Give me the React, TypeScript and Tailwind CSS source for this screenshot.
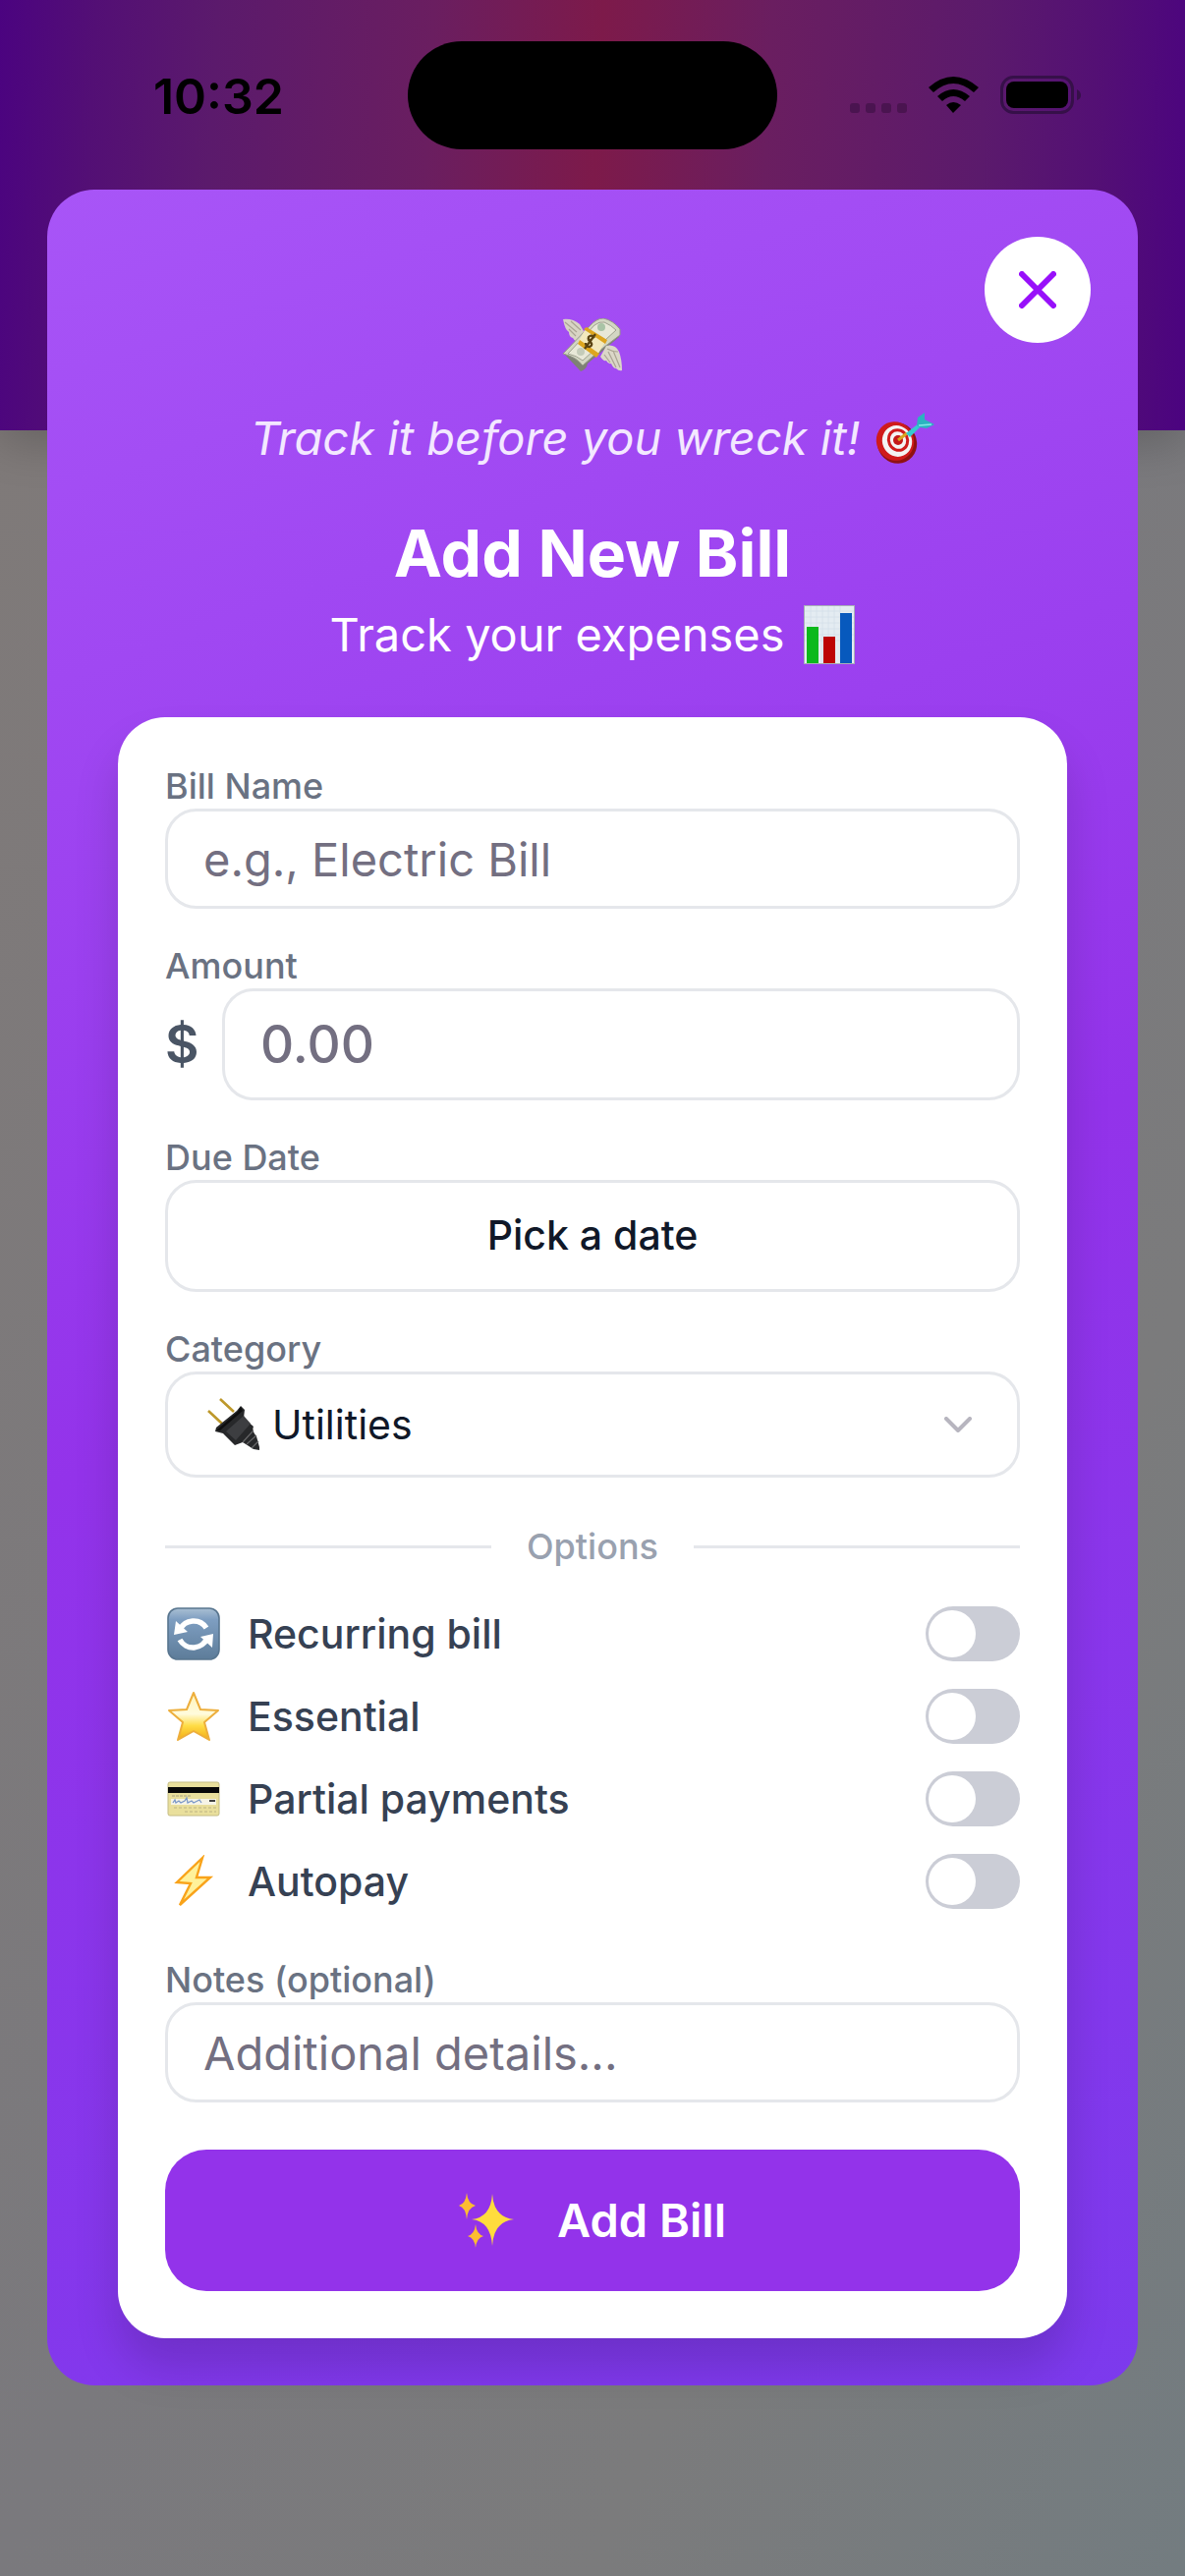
import React, { useState } from 'react';

const fieldBox = 'w-full rounded-[32px] border-[3px] border-[#e5e7eb] bg-white outline-none';
const labelText = 'block text-[36px] leading-[45px] font-medium text-[#6a7282]';

const MoneyIcon = () => (
  <svg viewBox="0 0 60 54" className="h-[54px] w-[60px]" aria-hidden="true">
    <path d="M0 1 Q10 0 17 6 L21 13 L17 24 Q13 25 10 20 Q6 19 6 14 Q2 12 0 1Z" fill="#d8d4c4" />
    <path d="M2 4 L14 14 M6 11 L13 18 M8 3 L18 12" stroke="#aaa493" strokeWidth="1.2" fill="none" />
    <path d="M1 36 L18 54 Q24 52 25 46 L37 36 L57 19 L58 11 L40 4Z" fill="#7e8175" />
    <path d="M0 36 L27 8 Q34 0 41 0 Q51 2 58 11 L58 17 L37 33 L20 48 Q13 39 0 36Z" fill="#d3d6c3" stroke="#959887" strokeWidth="1" />
    <path d="M5 36 L32 7 Q37 3 42 4 Q49 7 54 12 L20 43 Q14 38 5 36Z" fill="#e8e8d8" stroke="#9fa18f" strokeWidth="1" />
    <circle cx="39" cy="9" r="4" fill="#a9c3a6" />
    <circle cx="18" cy="34" r="4" fill="#c4cbb9" />
    <path d="M22 12 L15 25 L34 39 L43 24Z" fill="#f3e9bd" />
    <path d="M21 11 L24 9 L45 22 L43 26Z M15 26 L17 22 L37 36 L34 40Z" fill="#dda51f" />
    <path d="M32 20 Q29 16 26 19 Q25 22 28 24 Q31 27 27 29 Q23 29 23 25 M33 16 L22 31" stroke="#5a4312" strokeWidth="2.3" fill="none" />
    <path d="M44 28 Q53 26 57 34 Q60 42 60 53 Q57 54 54 51 Q51 51 49 46 Q46 47 44 43 Q41 44 38 39Z" fill="#dbd7c8" />
    <path d="M42 37 L48 45 M46 34 L54 50 M51 33 L58 50 M45 31 Q50 34 56 34" stroke="#aaa493" strokeWidth="1.2" fill="none" />
  </svg>
);

const TargetIcon = () => (
  <svg viewBox="0 0 60 52" className="h-[52px] w-[60px]" aria-hidden="true">
    <ellipse cx="22" cy="31" rx="20" ry="21" fill="#8f1212" transform="rotate(-25 22 31)" />
    <ellipse cx="20" cy="29" rx="19" ry="20" fill="#cf1b1b" transform="rotate(-25 20 29)" />
    <ellipse cx="22" cy="29" rx="15" ry="16" fill="#f4f4f4" transform="rotate(-25 22 29)" />
    <ellipse cx="23" cy="28" rx="11" ry="12" fill="#cf1b1b" transform="rotate(-25 23 28)" />
    <ellipse cx="23" cy="28" rx="8" ry="9" fill="#f4f4f4" transform="rotate(-25 23 28)" />
    <circle cx="23" cy="28" r="5" fill="#c41919" />
    <path d="M23 28 L32 21" stroke="#d8a620" strokeWidth="3" />
    <path d="M31 21 L44 11 L46 14 L35 25Z" fill="#36c9d0" />
    <path d="M42 13 L43 5 L50 0 L50 7 L60 12 L52 16 L45 15Z" fill="#2bb3c0" />
    <path d="M44 13 L57 12" stroke="#82e8e8" strokeWidth="1.5" />
  </svg>
);

const ChartIcon = () => (
  <svg viewBox="0 0 52 60" className="h-[60px] w-[52px]" aria-hidden="true">
    <rect x="0.5" y="0.5" width="51" height="59" fill="#e4ecf2" stroke="#a8b0b8" />
    <path d="M1 6H51M1 12H51M1 18H51M1 24H51M1 30H51M1 36H51M7 1V59M13 1V59M19 1V59M25 1V59M31 1V59M37 1V59" stroke="#d3dfe8" strokeWidth="0.8" />
    <rect x="3" y="22" width="12" height="37" fill="#0bb91c" />
    <rect x="20" y="32" width="12" height="27" fill="#bd0505" />
    <rect x="37" y="8" width="12" height="51" fill="#0759bd" />
  </svg>
);

const PlugIcon = () => (
  <svg viewBox="0 0 54 54" className="h-[54px] w-[54px] shrink-0" aria-hidden="true">
    <path d="M13 1 L27 14 M1 13 L15 26" stroke="#bd982b" strokeWidth="2.6" />
    <path d="M34 8 L38 12 L37 20 L47 29 Q45 33 50 39 L53 50 L53 53 L47 52 L36 45 L28 48 L16 36 L8 34 L9 30 L30 13Z" fill="#27282a" />
    <path d="M34 9 L36 13 L13 33 L9 33 L31 14Z" fill="#0e0e0f" />
    <path d="M37 18 L44 26 L29 43 L19 34Z" fill="#3d3e41" />
    <path d="M36 45 L47 33 M40 47 L50 38 M45 51 L52 44" stroke="#69696b" strokeWidth="1.2" />
  </svg>
);

const RecurringIcon = () => (
  <svg viewBox="0 0 54 54" className="h-[54px] w-[54px]" aria-hidden="true">
    <defs>
      <linearGradient id="recurBg" x1="0" y1="0" x2="0" y2="1">
        <stop offset="0" stopColor="#a9bfd3" />
        <stop offset="0.22" stopColor="#7e9ec1" />
        <stop offset="1" stopColor="#5d7c99" />
      </linearGradient>
    </defs>
    <rect x="1" y="1" width="52" height="52" rx="10" fill="url(#recurBg)" stroke="#58758f" strokeWidth="1.6" />
    <path d="M13 23 A15.500 15.500 0 0 1 40 21 M41 31 A15.500 15.500 0 0 1 13 33" fill="none" stroke="#fff" strokeWidth="5.500" />
    <path d="M9 14 L7 28 L21 25Z M34 30 L47 27 L46 41Z" fill="#fff" />
  </svg>
);

const StarIcon = () => (
  <svg viewBox="0 0 54 54" className="h-[54px] w-[54px]" aria-hidden="true">
    <defs>
      <linearGradient id="starBg" x1="0" y1="0" x2="0" y2="1">
        <stop offset="0" stopColor="#fff4b8" />
        <stop offset="0.45" stopColor="#fffbdc" />
        <stop offset="0.7" stopColor="#ffdc45" />
        <stop offset="1" stopColor="#f3ac13" />
      </linearGradient>
    </defs>
    <path d="M27 3 L34 20 L52 21 L38 33 L43 51 L27 42 L11 51 L16 33 L2 21 L20 20Z" fill="url(#starBg)" stroke="#edae3c" strokeWidth="2" strokeLinejoin="round" />
  </svg>
);

const CardIcon = () => (
  <svg viewBox="0 0 54 54" className="h-[54px] w-[54px]" aria-hidden="true">
    <rect x="1" y="10" width="52" height="34" rx="2" fill="#e9df9c" stroke="#c5bd85" />
    <rect x="1" y="15" width="52" height="6" fill="#080808" />
    <rect x="4" y="27" width="46" height="6" fill="#f6f4e6" />
    <path d="M5 24 H25" stroke="#a9a27c" strokeWidth="1.2" strokeDasharray="3 1" />
    <path d="M6 31 L8 28 L9 31 L12 29 L14 31 L18 29 L20 26 L21 31 L25 29 L27 31 L33 28 L35 31" fill="none" stroke="#7c99c8" strokeWidth="1.3" />
    <path d="M43 29 H49" stroke="#444" strokeWidth="2" />
    <path d="M7 36 H50 M18 40 H50" stroke="#cbc28c" strokeWidth="1.6" strokeDasharray="3 2" />
  </svg>
);

const BoltIcon = () => (
  <svg viewBox="0 0 54 54" className="h-[54px] w-[54px]" aria-hidden="true">
    <path d="M36 3 L10 28 L24 29 L13 51 L44 23 L30 23Z" fill="#fff19a" stroke="#f9a31a" strokeWidth="2.4" strokeLinejoin="miter" />
  </svg>
);

const SparklesIcon = () => (
  <svg viewBox="0 0 56 56" className="h-[56px] w-[56px]" aria-hidden="true">
    <path d="M34 1 Q35.500 25 56 27 Q35.500 29 34 54 Q32.500 29 13 27 Q32.500 25 34 1Z" fill="#ffdc3d" />
    <circle cx="34" cy="27" r="5" fill="#ffdc3d" />
    <path d="M8 0 Q9 11 17 13 Q9 15 8 27 Q7 15 0 13 Q7 11 8 0Z" fill="#fdbc32" />
    <path d="M17 32 Q18 42 25 44 Q18 46 17 56 Q16 46 9 44 Q16 42 17 32Z" fill="#fdbc32" />
  </svg>
);

const OPTIONS = [
  { key: 'recurring', label: 'Recurring bill', Icon: RecurringIcon },
  { key: 'essential', label: 'Essential', Icon: StarIcon },
  { key: 'partial', label: 'Partial payments', Icon: CardIcon },
  { key: 'autopay', label: 'Autopay', Icon: BoltIcon },
];

const StatusBar = () => (
  <div className="grid h-[193px] grid-cols-[1fr_376px_1fr] pt-[42px]">
    <div className="flex h-[112px] items-center justify-center pl-[30px] text-[50px] leading-[60px] font-semibold text-black">10:32</div>
    <div className="h-[110px] rounded-full bg-black" />
    <div className="flex h-[110px] items-center justify-end pr-[106px]">
      <svg viewBox="0 0 236 40" className="h-[40px] w-[236px]" aria-hidden="true">
        <g fill="#4a1450">
          <rect x="1" y="28" width="10" height="10" rx="3" />
          <rect x="17" y="28" width="10" height="10" rx="3" />
          <rect x="33" y="28" width="10" height="10" rx="3" />
          <rect x="49" y="28" width="10" height="10" rx="3" />
        </g>
        <path d="M81 12 Q106 -10 132 12 L127 17 Q106 -1 86 17Z" />
        <path d="M90 21 Q106 7 123 21 L118 26 Q106 16 95 26Z" />
        <path d="M99 30 Q106 24 114 30 L106 38Z" />
        <rect x="155.500" y="1.500" width="72" height="36" rx="12" fill="none" stroke="#361049" strokeWidth="3" />
        <rect x="160" y="6" width="63" height="27" rx="8" />
        <path d="M232 14 Q236 16 236 20 Q236 24 232 25Z" fill="#361049" />
      </svg>
    </div>
  </div>
);

export default function App() {
  const [toggles, setToggles] = useState<Record<string, boolean>>({});
  const flip = (key: string) => setToggles((prev) => ({ ...prev, [key]: !prev[key] }));

  return (
    <div className="grid min-h-screen font-[Inter,'Noto_Sans',sans-serif]">
      {/* dimmed page behind the modal */}
      <div className="col-start-1 row-start-1 bg-[linear-gradient(115deg,#807a78_0%,#7a797d_50%,#7b7b7c_75%,#737c80_100%)]">
        <div className="h-[438px] bg-[linear-gradient(93deg,#4b0380_0%,#530f75_8%,#5b1a6c_18%,#6a1e60_36%,#7d1a4a_50%,#6a1e60_64%,#5b1a6c_82%,#530f75_92%,#4b0380_100%)] shadow-[0_12px_45px_rgba(0,0,0,0.2)]" />
      </div>

      <div className="col-start-1 row-start-1">
        <StatusBar />
        <main className="relative mx-12 rounded-[48px] bg-[linear-gradient(160deg,#a855f7_0%,#9333ea_50%,#7c3aed_100%)] px-[72px] pt-[131px] pb-12">
          <button type="button" aria-label="Close" className="absolute top-12 right-12 flex size-[108px] items-center justify-center rounded-full bg-white">
            <svg viewBox="0 0 38 38" className="size-[38px]" fill="none" stroke="#9810fa" strokeWidth="6" strokeLinecap="round">
              <path d="M3 3 L35 35 M35 3 L3 35" />
            </svg>
          </button>

          <header className="flex flex-col items-center text-white">
            <MoneyIcon />
            <p className="mt-8 flex items-center gap-4 text-[47px] leading-[72px] italic text-[#f3e8ff]">
              Track it before you wreck it! <TargetIcon />
            </p>
            <h1 className="mt-9 text-[66px] leading-[90px] font-bold">Add New Bill</h1>
            <p className="mt-2 mb-[54px] flex items-center gap-5 text-[47px] leading-[60px]">
              Track your expenses <ChartIcon />
            </p>
          </header>

          <form onSubmit={(e) => e.preventDefault()} className="flex flex-col gap-12 rounded-[48px] bg-white p-12 shadow-[0_30px_45px_rgba(0,0,0,0.15)]">
            <div className="flex flex-col gap-9">
              <div>
                <label htmlFor="name" className={labelText}>Bill Name</label>
                <input id="name" type="text" placeholder="e.g., Electric Bill" className={`${fieldBox} block h-[102px] px-9 text-[47px] placeholder:text-[#736f81]`} />
              </div>

              <div>
                <label htmlFor="amount" className={labelText}>Amount</label>
                <div className="flex items-center">
                  <span className="w-[58px] shrink-0 text-[53px] leading-[60px] font-semibold text-[#4a5565]">$</span>
                  <input id="amount" type="text" inputMode="decimal" placeholder="0.00" className={`${fieldBox} block h-[114px] min-w-0 px-9 text-[53px] font-medium placeholder:text-[#736f81]`} />
                </div>
              </div>

              <div>
                <label htmlFor="date" className={labelText}>Due Date</label>
                <button id="date" type="button" className={`${fieldBox} block h-[114px] text-[41px] font-medium text-[#101828]`}>Pick a date</button>
              </div>

              <div>
                <label htmlFor="category" className={labelText}>Category</label>
                <div className={`${fieldBox} flex h-[108px] items-center gap-3 pr-[46px] pl-10`}>
                  <PlugIcon />
                  <select id="category" className="min-w-0 flex-1 appearance-none bg-transparent text-[41px] leading-[60px] text-[#101828] outline-none">
                    <option>Utilities</option>
                  </select>
                  <svg viewBox="0 0 28 16" className="h-4 w-7" fill="none" stroke="#b7b5bf" strokeWidth="4" strokeLinecap="round" strokeLinejoin="round" aria-hidden="true">
                    <path d="M2 2 L14 14 L26 2" />
                  </svg>
                </div>
              </div>
            </div>

            <div role="group" aria-labelledby="options-title" className="flex flex-col gap-9">
              <div className="flex items-center gap-9">
                <div className="h-[3px] flex-1 bg-[#e5e7eb]" />
                <span id="options-title" className="text-[36px] leading-[45px] font-medium text-[#99a1af]">Options</span>
                <div className="h-[3px] flex-1 bg-[#e5e7eb]" />
              </div>
              <div className="flex flex-col gap-6">
                {OPTIONS.map(({ key, label, Icon }) => (
                  <div key={key} className="flex h-[60px] items-center">
                    <span className="flex w-[84px] pl-0.5"><Icon /></span>
                    <label htmlFor={key} className="flex-1 text-[41px] leading-[60px] font-medium text-[#364153]">{label}</label>
                    <input
                      id={key}
                      type="checkbox"
                      role="switch"
                      checked={!!toggles[key]}
                      onChange={() => flip(key)}
                      className="flex h-14 w-24 appearance-none items-center rounded-full bg-[#cbcdd6] px-[3px] before:size-12 before:rounded-full before:bg-white before:content-[''] checked:bg-[#9333ea] checked:before:ml-auto"
                    />
                  </div>
                ))}
              </div>
            </div>

            <div>
              <label htmlFor="notes" className={labelText}>Notes (optional)</label>
              <input id="notes" type="text" placeholder="Additional details..." className={`${fieldBox} block h-[102px] px-9 text-[47px] placeholder:text-[#736f81]`} />
            </div>

            <button type="submit" className="flex h-36 items-center justify-center gap-11 rounded-[42px] bg-[#9333ea] text-[47px] leading-[60px] font-semibold text-white">
              <SparklesIcon />
              Add Bill
            </button>
          </form>
        </main>
      </div>
    </div>
  );
}
